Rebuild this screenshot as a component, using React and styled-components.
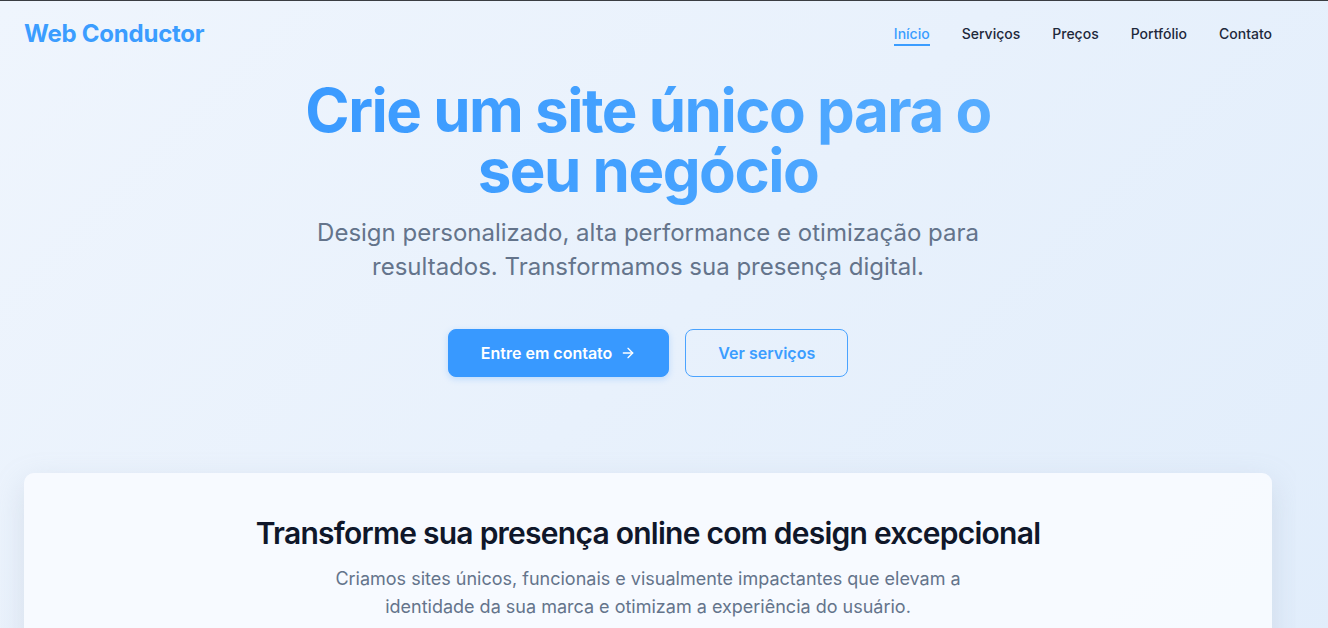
import React from 'react';
import styled, { createGlobalStyle } from 'styled-components';
import { ArrowRight } from 'lucide-react';

const GlobalStyle = createGlobalStyle`
  html, body {
    margin: 0;
    padding: 0;
  }

  body {
    font-family: Inter, "Noto Sans", sans-serif;
    background: linear-gradient(135deg, #eff5fd 0%, #e8f1fc 50%, #e1edfb 100%);
    min-height: 100vh;
    border-top: 1px solid #3a3d42;
    -webkit-font-smoothing: antialiased;
  }
`;

const Page = styled.div`
  width: 1296px;
  min-height: 627px;
  overflow: hidden;
`;

const Header = styled.header`
  display: flex;
  align-items: center;
  justify-content: space-between;
  height: 64px;
  padding: 0 24px;
`;

const Logo = styled.a`
  font-size: 24px;
  font-weight: 700;
  letter-spacing: -0.01em;
  color: #3b9dff;
  text-decoration: none;
`;

const Nav = styled.nav`
  display: flex;
  gap: 32px;
`;

const NavLink = styled.a`
  position: relative;
  font-size: 14px;
  font-weight: 500;
  color: ${({ $active }) => ($active ? '#3b9dff' : '#1e293b')};
  text-decoration: none;

  &::after {
    content: '';
    position: absolute;
    left: 0;
    right: 0;
    bottom: -4px;
    height: 2px;
    background: ${({ $active }) => ($active ? '#3b9dff' : 'transparent')};
  }
`;

const Hero = styled.section`
  display: flex;
  flex-direction: column;
  align-items: center;
  text-align: center;
  padding: 15px 24px 0;
`;

const Title = styled.h1`
  margin: 0;
  max-width: 720px;
  font-size: 60px;
  line-height: 60px;
  font-weight: 700;
  letter-spacing: -0.025em;
  background: linear-gradient(90deg, #3a9aff 0%, #45a2ff 55%, #58adff 100%);
  -webkit-background-clip: text;
  background-clip: text;
  color: transparent;
  padding-bottom: 6px;
`;

const Lead = styled.p`
  margin: 10px 0 0;
  max-width: 680px;
  font-size: 24px;
  line-height: 34px;
  font-weight: 400;
  color: #64748b;
`;

const Actions = styled.div`
  display: flex;
  gap: 16px;
  margin-top: 45px;
`;

const Button = styled.a`
  display: inline-flex;
  align-items: center;
  justify-content: center;
  gap: 8px;
  height: 48px;
  box-sizing: border-box;
  padding: 0 32px;
  border-radius: 8px;
  font-size: 16px;
  font-weight: 600;
  text-decoration: none;
  background: ${({ $primary }) => ($primary ? '#3899ff' : 'transparent')};
  color: ${({ $primary }) => ($primary ? '#ffffff' : '#3b9dff')};
  border: 1px solid ${({ $primary }) => ($primary ? '#3899ff' : '#4aa3ff')};
  box-shadow: ${({ $primary }) => ($primary ? '0 2px 6px rgba(56, 153, 255, 0.25)' : 'none')};
`;

const Card = styled.section`
  margin: 96px 24px 0;
  padding: 42px 24px 40px;
  border-radius: 10px;
  background: rgba(248, 251, 255, 0.9);
  box-shadow: 0 10px 30px rgba(148, 163, 184, 0.25);
  text-align: center;
`;

const CardTitle = styled.h2`
  margin: 0;
  font-size: 30px;
  line-height: 36px;
  font-weight: 600;
  letter-spacing: -0.025em;
  color: #0f172a;
`;

const CardText = styled.p`
  margin: 14px auto 0;
  max-width: 660px;
  font-size: 18px;
  line-height: 28px;
  color: #64748b;
`;

const links = ['Início', 'Serviços', 'Preços', 'Portfólio', 'Contato'];

const App = () => (
  <Page>
    <GlobalStyle />
    <Header>
      <Logo href="#">Web Conductor</Logo>
      <Nav>
        {links.map((label, index) => (
          <NavLink key={label} href="#" $active={index === 0}>
            {label}
          </NavLink>
        ))}
      </Nav>
    </Header>

    <Hero>
      <Title>Crie um site único para o seu negócio</Title>
      <Lead>
        Design personalizado, alta performance e otimização para resultados.
        Transformamos sua presença digital.
      </Lead>
      <Actions>
        <Button $primary href="#">
          Entre em contato <ArrowRight size={16} strokeWidth={2} />
        </Button>
        <Button href="#">Ver serviços</Button>
      </Actions>
    </Hero>

    <Card>
      <CardTitle>Transforme sua presença online com design excepcional</CardTitle>
      <CardText>
        Criamos sites únicos, funcionais e visualmente impactantes que elevam a
        identidade da sua marca e otimizam a experiência do usuário.
      </CardText>
    </Card>
  </Page>
);

export default App;
